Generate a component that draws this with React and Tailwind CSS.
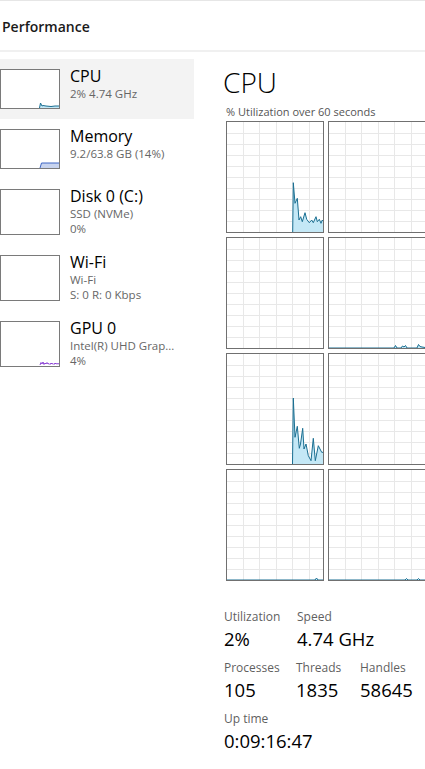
import React from "react";

const GRID_V = [16, 32, 49, 65, 82];
const GRID_H = [11, 22, 33, 44, 55, 66, 77, 88, 99];

function Graph({ points }) {
  const line = points ? points.map((p) => p.join(",")).join(" ") : "";
  const fill = points
    ? `${points[0][0]},110 ` + line + ` ${points[points.length - 1][0]},110`
    : "";
  return (
    <div className="w-[98px] h-[112px] border border-[#707070] bg-white shrink-0">
      <svg width="96" height="110" viewBox="0 0 96 110" className="block">
        {GRID_V.map((x) => (
          <line key={"v" + x} x1={x + 0.5} y1="0" x2={x + 0.5} y2="110" stroke="#e8e8e8" strokeWidth="1" />
        ))}
        {GRID_H.map((y) => (
          <line key={"h" + y} x1="0" y1={y + 0.5} x2="96" y2={y + 0.5} stroke="#e8e8e8" strokeWidth="1" />
        ))}
        {points && (
          <>
            <polygon points={fill} fill="#c4e8f6" />
            <polyline points={line} fill="none" stroke="#1a6f92" strokeWidth="1" strokeLinejoin="round" />
          </>
        )}
      </svg>
    </div>
  );
}

const g1 = [
  [65.7, 110], [66.3, 60.7], [68, 81.3], [70.3, 76.3], [72, 98], [73.7, 94.7], [75.3, 99.7],
  [78, 90.7], [79.7, 97.3], [82.3, 100.7], [84.7, 98], [86.3, 100.7], [89, 94.7], [90.3, 99.7],
  [92.3, 97.3], [94, 101.3], [95.3, 98], [96, 99],
];
const g3 = [
  [65.5, 110], [66.3, 44], [68, 83.3], [70.3, 72.3], [72.3, 94.3], [73.5, 90], [75.7, 74.3],
  [77, 95], [79, 90], [81.3, 101.7], [84, 106.7], [86.3, 84.3], [88.3, 106.7], [91.3, 91.7],
  [94.7, 98.3], [96, 98.3],
];
const g4 = [
  [0, 110], [65, 110], [66.5, 107.5], [68, 110], [72, 110], [73.5, 108], [75, 109], [76.5, 107.5], [78, 110],
  [88, 110], [89.5, 106.5], [91, 108.5], [93, 109], [96, 109.5],
];
const g7 = [[0, 110], [88, 110], [89.5, 108], [91, 110], [96, 110]];
const g8 = [[0, 110], [76, 110], [77.5, 108.5], [79, 110], [88, 110], [89.5, 108.5], [91, 110], [96, 110]];

function Thumb({ tall, kind }) {
  const h = tall ? 46 : 40;
  const ih = h - 2;
  return (
    <div className={`w-[60px] ${tall ? "h-[46px]" : "h-[40px]"} border border-[#7a7a7a] bg-white shrink-0`}>
      <svg width="58" height={ih} viewBox={`0 0 58 ${ih}`} className="block">
        {kind === "cpu" && (
          <>
            <polygon points="38.5,38 39.5,33 41,36 42,35.5 45,36 50,36.5 54,36 58,36 58,38" fill="#c4e8f6" />
            <polyline points="38.5,38 39.5,33 41,36 42,35.5 45,36 50,36.5 54,36 58,36" fill="none" stroke="#1a6f92" strokeWidth="1" />
          </>
        )}
        {kind === "mem" && (
          <>
            <polygon points="39,38 40.5,33 58,33 58,38" fill="#c7d3ee" />
            <polyline points="39,38 40.5,33 58,33" fill="none" stroke="#3f67c4" strokeWidth="1" />
          </>
        )}
        {kind === "gpu" && (
          <polyline
            points="39,43 40,40.5 41,42 42,40 43,42.5 44,41 45,42 46,40.5 47,42 48,41.5 49,42.5 50,41 51,42 52,41.5 53,42.5 54,41 55,42 56,41.5 57,42 58,41.5"
            fill="none"
            stroke="#8a3fd6"
            strokeWidth="1"
          />
        )}
      </svg>
    </div>
  );
}

function Item({ title, lines, tall, kind, selected }) {
  return (
    <div
      className={`flex items-start gap-[10px] py-[10px] ${tall ? "h-[66px]" : "h-[60px]"} ${
        selected ? "bg-[#f3f3f3]" : ""
      }`}
    >
      <Thumb tall={tall} kind={kind} />
      <div className="flex flex-col -mt-[3px]">
        <div className="text-[16px] leading-[20px] text-black">{title}</div>
        {lines.map((l, i) => (
          <div key={i} className="text-[11.5px] leading-[15px] text-[#666]">
            {l}
          </div>
        ))}
      </div>
    </div>
  );
}

function Stat({ label, value, w }) {
  return (
    <div className={`flex flex-col ${w}`}>
      <div className="text-[12px] leading-[16px] text-[#5f5f5f]">{label}</div>
      <div className="text-[18.5px] leading-[28px] text-black">{value}</div>
    </div>
  );
}

export default function App() {
  return (
    <div className="w-[425px] h-[769px] overflow-hidden bg-white font-['Segoe_UI','Open_Sans',sans-serif] border-t border-[#e6e6e6]">
      <div className="h-[49px] flex items-center pl-[2px] pt-[1px]">
        <span className="text-[14px] font-semibold text-[#1a1a1a]">Performance</span>
      </div>
      <div className="h-[2px] bg-[#f0f0f0]" />
      <div className="flex pt-[7px]">
        <div className="w-[194px] shrink-0 flex flex-col">
          <Item title="CPU" lines={["2% 4.74 GHz"]} kind="cpu" selected />
          <Item title="Memory" lines={["9.2/63.8 GB (14%)"]} kind="mem" />
          <Item title="Disk 0 (C:)" lines={["SSD (NVMe)", "0%"]} tall />
          <Item title="Wi-Fi" lines={["Wi-Fi", "S: 0 R: 0 Kbps"]} tall />
          <Item title="GPU 0" lines={["Intel(R) UHD Grap...", "4%"]} tall kind="gpu" />
        </div>
        <div className="flex-1 pl-[32px] flex flex-col">
          <div className="text-[28px] leading-[36px] font-light text-black -ml-[3px] mt-[5px]">CPU</div>
          <div className="text-[11px] leading-[14px] text-[#555] mt-[5px]">% Utilization over 60 seconds</div>
          <div className="grid grid-cols-[98px_98px] gap-x-[4px] gap-y-[4px] mt-[2px]">
            <Graph points={g1} />
            <Graph />
            <Graph />
            <Graph points={g4} />
            <Graph points={g3} />
            <Graph />
            <Graph points={g7} />
            <Graph points={g8} />
          </div>
          <div className="flex flex-col gap-[7px] mt-[28px] -ml-[2px]">
            <div className="flex">
              <Stat label="Utilization" value="2%" w="w-[73px]" />
              <Stat label="Speed" value="4.74 GHz" w="w-[90px]" />
            </div>
            <div className="flex">
              <Stat label="Processes" value="105" w="w-[72px]" />
              <Stat label="Threads" value="1835" w="w-[64px]" />
              <Stat label="Handles" value="58645" w="w-[70px]" />
            </div>
            <Stat label="Up time" value="0:09:16:47" w="w-[120px]" />
          </div>
        </div>
      </div>
    </div>
  );
}
